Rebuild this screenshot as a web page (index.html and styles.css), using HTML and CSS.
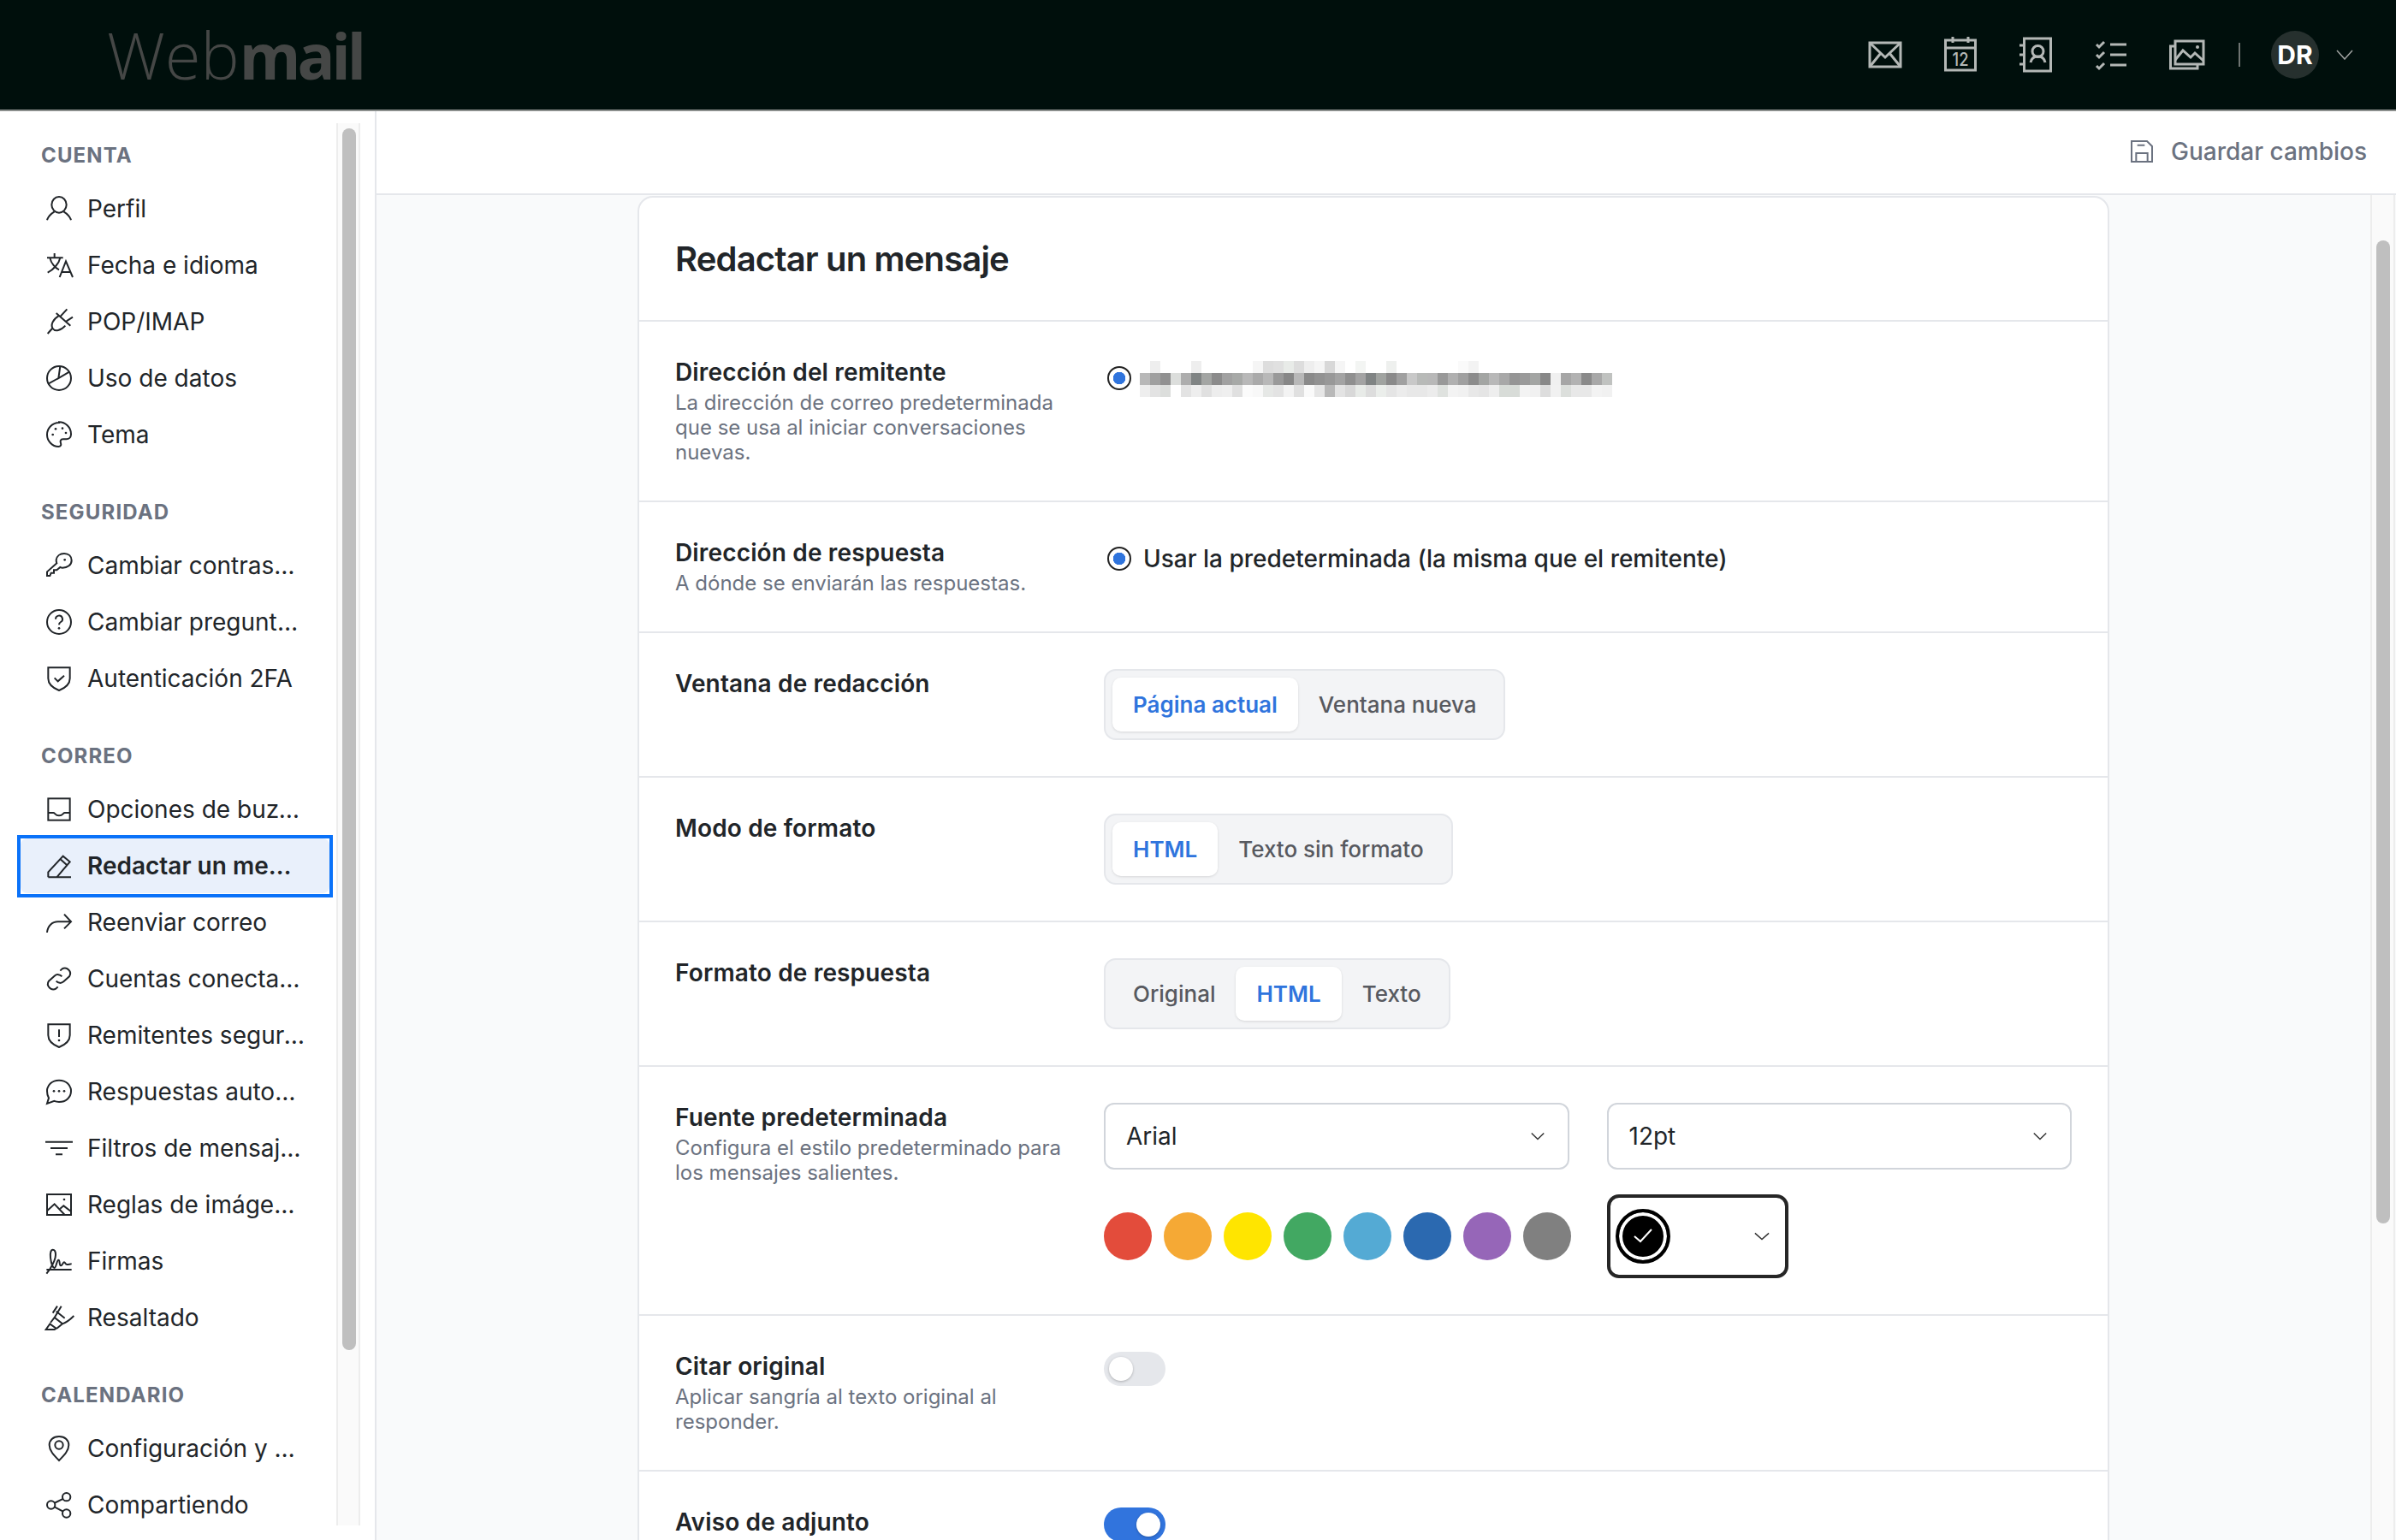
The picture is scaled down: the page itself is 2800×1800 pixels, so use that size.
FILE: index.html
```html
<!DOCTYPE html>
<html lang="es">
<head>
    <meta charset="UTF-8">
    <meta name="viewport" content="width=device-width, initial-scale=1.0">
    <title>Webmail</title>
    <link rel="stylesheet" href="styles.css">
</head>
<body>
    <!-- Barra superior -->
    <header class="topbar">
        <div class="logo">Web<b>mail</b></div>
        <div class="apps">
            <svg class="app-icon" viewBox="0 0 48 48"><rect x="6" y="10" width="36" height="28"/><path d="M6 10l18 17 18-17M6 38l13-16M42 38L29 22"/></svg>
            <svg class="app-icon" viewBox="0 0 48 48"><rect x="6.5" y="7" width="35" height="35"/><path d="M6.5 16h35M15 3v7M33 3v7"/><text class="cal-day" x="24" y="37" textLength="19" lengthAdjust="spacingAndGlyphs">12</text></svg>
            <svg class="app-icon" viewBox="0 0 48 48"><rect x="10.500" y="5" width="31" height="38"/><path d="M5 13h5M5 24h5M5 35h5M18 33c1-5 4.500-7 8.500-7s7.500 2 8.500 7"/><circle cx="26.500" cy="20" r="6.500"/></svg>
            <svg class="app-icon" viewBox="0 0 48 48"><path d="M7 12l3 3 6-6M7 24l3 3 6-6M7 37l3 3 6-6M23 12h19M23 24h19M23 36h19"/></svg>
            <svg class="app-icon" viewBox="0 0 48 48"><rect x="11" y="8" width="33" height="27"/><path d="M11 14H5.500v26H37v-5M11 30l9-11 9 8 5-5 10 9"/><circle class="dot" cx="37" cy="15" r="2"/></svg>
            <span class="apps-sep"></span>
            <span class="avatar">DR</span>
            <svg class="top-chevron" viewBox="0 0 20 12"><path d="M1 1l9 10 9-10"/></svg>
        </div>
    </header>

    <div class="layout">
        <!-- Menu lateral -->
        <aside class="sidebar">
            <nav class="nav">
                <div class="nav-title">CUENTA</div>
                <a class="nav-item"><svg class="nav-icon" viewBox="0 0 24 24"><ellipse cx="12" cy="8.500" rx="6.500" ry="7"/><path d="M1.500 22c1-3.500 4-6 6.500-7.500M22.500 22c-1-3.500-4-6-6.500-7.500"/></svg><span>Perfil</span></a>
                <a class="nav-item"><svg class="nav-icon" viewBox="0 0 24 24"><path d="M1.500 5.500h14M8 1.500v4M4 5.500c1 5 5 9 8 10.500M13 5.500C12 10.500 7 16 2 18.500M12.500 22.500l5.500-14 6 14M14.500 18h7"/></svg><span>Fecha e idioma</span></a>
                <a class="nav-item"><svg class="nav-icon" viewBox="0 0 24 24"><path d="M2 22.500l4-4.500M9.500 4.500L22 15.500M11.500 7c-5 3-7 8-5 11s7 2 11-2.500M13.500 7L19 1M18.500 11.500L24 8"/></svg><span>POP/IMAP</span></a>
                <a class="nav-item"><svg class="nav-icon" viewBox="0 0 24 24"><circle cx="12" cy="12" r="10.500"/><path d="M13 1.500L11.500 12l9.500-5.500M11.500 12L2.500 17"/></svg><span>Uso de datos</span></a>
                <a class="nav-item"><svg class="nav-icon" viewBox="0 0 24 24"><path d="M12 1.500C6 1.500 1.500 6.500 1.500 12s4.500 10.500 10 10.500c2 0 2.500-1.500 2-3s-.5-3.500 2-3.500h3c2 0 4-1.500 4-4.500 0-6-5-10.500-10.500-10.500z"/><circle class="dot" cx="6.500" cy="12" r="1"/><circle class="dot" cx="9" cy="7" r="1"/><circle class="dot" cx="15" cy="6.500" r="1"/><circle class="dot" cx="18" cy="10.500" r="1"/></svg><span>Tema</span></a>

                <div class="nav-title">SEGURIDAD</div>
                <a class="nav-item"><svg class="nav-icon" viewBox="0 0 24 24"><path d="M23 7.500c0 4-3.500 6.500-8 6.500-1 0-1.500-.3-2-.5L10 16H7.500v2.500H5l-1 2.500H1.500v-3.500L10 10c-.5-1-.5-2-.5-3 .5-3 3-5.500 7-5.500s6.500 2.500 6.500 6z"/><circle class="dot" cx="17" cy="7" r="1"/></svg><span>Cambiar contraseña</span></a>
                <a class="nav-item"><svg class="nav-icon" viewBox="0 0 24 24"><circle cx="12" cy="12" r="10.500"/><path d="M9 9.500a3 3 0 1 1 4.500 2.500c-1 .6-1.500 1.200-1.500 2.500"/><circle class="dot" cx="12" cy="17.500" r="1"/></svg><span>Cambiar pregunta de seguridad</span></a>
                <a class="nav-item"><svg class="nav-icon" viewBox="0 0 24 24"><path d="M2.500 2.500h19V12c0 5-4.500 8.500-9.500 10.500C7 20.500 2.500 17 2.500 12z"/><path d="M8 11.500l3 3 5.500-5"/></svg><span>Autenticación 2FA</span></a>

                <div class="nav-title">CORREO</div>
                <a class="nav-item"><svg class="nav-icon" viewBox="0 0 24 24"><rect x="2.500" y="2.500" width="19" height="19"/><path d="M2.500 15h4.500c1.500 0 1.500 2.500 5 2.500s3.500-2.500 5-2.500h4.500"/></svg><span>Opciones de buzón</span></a>
                <a class="nav-item is-active"><svg class="nav-icon" viewBox="0 0 24 24"><path d="M2.500 22h20M2.500 22v-4.500L15.500 3.500l6 5-11.500 13.500M13 6l6 5.500"/></svg><span>Redactar un mensaje</span></a>
                <a class="nav-item"><svg class="nav-icon" viewBox="0 0 24 24"><path d="M1.500 21c.5-6 4.500-9.500 9.500-9.500h11.500M16.500 5l6 6.500-6 6"/></svg><span>Reenviar correo</span></a>
                <a class="nav-item"><svg class="nav-icon" viewBox="0 0 24 24"><path d="M9.500 14a4.500 4.500 0 0 0 6.500.5l5-4.500a4.700 4.700 0 0 0-6.500-6.500l-1.500 1.500M14.500 10a4.500 4.500 0 0 0-6.500-.5l-5 4.500a4.700 4.700 0 0 0 6.500 6.500l1.500-1.500"/></svg><span>Cuentas conectadas</span></a>
                <a class="nav-item"><svg class="nav-icon" viewBox="0 0 24 24"><path d="M2.500 2.500h19V12c0 5-4.500 8.500-9.500 10.500C7 20.500 2.500 17 2.500 12z"/><path d="M12 7v6.500"/><circle class="dot" cx="12" cy="16.500" r="1"/></svg><span>Remitentes seguros</span></a>
                <a class="nav-item"><svg class="nav-icon" viewBox="0 0 24 24"><path d="M12 2c6 0 10.500 4 10.500 9.500S18 21 12 21c-1.500 0-3-.3-4.200-.8L1.500 22.500l1.500-5C2 16 1.500 13.500 1.500 11.500 1.500 6 6 2 12 2z"/><circle class="dot" cx="7.500" cy="11.500" r="1"/><circle class="dot" cx="12" cy="11.500" r="1"/><circle class="dot" cx="16.500" cy="11.500" r="1"/></svg><span>Respuestas automáticas</span></a>
                <a class="nav-item"><svg class="nav-icon" viewBox="0 0 24 24"><path d="M0 6.500h24M4.500 12h15M9 17.500h6"/></svg><span>Filtros de mensajes</span></a>
                <a class="nav-item"><svg class="nav-icon" viewBox="0 0 24 24"><rect x="1.500" y="3" width="21" height="18"/><path d="M1.500 17.500l6.500-6 9 9.500M13 15.500l3-2.500 6.500 5"/><circle class="dot" cx="16.500" cy="7.500" r="1"/></svg><span>Reglas de imágenes</span></a>
                <a class="nav-item"><svg class="nav-icon" viewBox="0 0 24 24"><path d="M1 19.500h22M1 23l3-4c2.500-4 5-8 5-12.500C9 4 8 2 6.500 2S4 4.500 4.500 9s2 9 3.500 9 2-7 3.500-7 .5 5 2 5 2-3 3-3 1 2 2.500 2 2.500-.5 4-.5"/></svg><span>Firmas</span></a>
                <a class="nav-item"><svg class="nav-icon" viewBox="0 0 24 24"><path d="M.5 22.500l3.500-5 5.500 4-1.500 1zM4.500 16.500L8 12l7 5.500-5 4M8 12l6-10M6.500 8l4-6M9.500 6.500l7.500 6M15 17.500c3-1 6-3 10-7"/></svg><span>Resaltado</span></a>

                <div class="nav-title">CALENDARIO</div>
                <a class="nav-item"><svg class="nav-icon" viewBox="0 0 24 24"><path d="M12 1.500c5.500 0 8.500 3.500 8.500 7.500 0 5-4 9-8.500 13.500C7.500 18 3.500 14 3.500 9c0-4 3-7.500 8.500-7.500z"/><circle cx="12" cy="9" r="3.500"/></svg><span>Configuración y ubicación</span></a>
                <a class="nav-item"><svg class="nav-icon" viewBox="0 0 24 24"><circle cx="18.500" cy="5" r="3.500"/><circle cx="5" cy="12" r="3.500"/><circle cx="18.500" cy="19.500" r="3.500"/><path d="M8 10.300l7.500-3.600M8 13.800l7.500 3.900"/></svg><span>Compartiendo</span></a>
            </nav>
            <div class="scrollbar scrollbar-side"><div class="thumb thumb-side"></div></div>
        </aside>

        <main class="main">
            <div class="toolbar">
                <button class="save">
                    <svg class="nav-icon" viewBox="0 0 24 24"><path d="M3 3h13.500L21 7.500V21H3zM8 6.500h6.500M7 21v-7.500h10V21"/></svg>
                    Guardar cambios
                </button>
            </div>

            <div class="content">
                <div class="scroll-area">
                    <section class="card">
                        <h1 class="card-title">Redactar un mensaje</h1>

                        <div class="row">
                            <div class="row-label">
                                <h3>Dirección del remitente</h3>
                                <p>La dirección de correo predeterminada que se usa al iniciar conversaciones nuevas.</p>
                            </div>
                            <div class="radio-line radio-line-blur">
                                <span class="radio"></span>
                                <!-- direccion tapada con pixeles, igual que en la captura -->
                                <svg class="blurred" viewBox="0 0 552 42" shape-rendering="crispEdges">
                                    <rect x="12" y="0" width="12" height="14" fill="#eee"/><rect x="60" y="0" width="12" height="14" fill="#eee"/><rect x="132" y="0" width="12" height="14" fill="#f5f5f5"/><rect x="144" y="0" width="12" height="14" fill="#ddd"/><rect x="156" y="0" width="12" height="14" fill="#e0e0e0"/><rect x="168" y="0" width="12" height="14" fill="#e8ebe8"/><rect x="180" y="0" width="12" height="14" fill="#ddd"/><rect x="192" y="0" width="12" height="14" fill="#eee"/><rect x="204" y="0" width="12" height="14" fill="#f5f5f5"/><rect x="216" y="0" width="12" height="14" fill="#d8d8d8"/><rect x="228" y="0" width="12" height="14" fill="#f5f5f5"/><rect x="252" y="0" width="12" height="14" fill="#f3f5f3"/><rect x="288" y="0" width="12" height="14" fill="#eef0ee"/><rect x="372" y="0" width="12" height="14" fill="#fafafa"/><rect x="384" y="0" width="12" height="14" fill="#f3f3f3"/>
                                    <rect x="0" y="14" width="12" height="14" fill="#b8b8b8"/><rect x="12" y="14" width="12" height="14" fill="#a0a0a0"/><rect x="24" y="14" width="12" height="14" fill="#919191"/><rect x="36" y="14" width="12" height="14" fill="#dcdedc"/><rect x="48" y="14" width="12" height="14" fill="#adadad"/><rect x="60" y="14" width="12" height="14" fill="#808484"/><rect x="72" y="14" width="12" height="14" fill="#a3a5a3"/><rect x="84" y="14" width="12" height="14" fill="#8b8b8b"/><rect x="96" y="14" width="12" height="14" fill="#a1a1a1"/><rect x="108" y="14" width="12" height="14" fill="#a7a9a7"/><rect x="120" y="14" width="12" height="14" fill="#b8b8b8"/><rect x="132" y="14" width="12" height="14" fill="#aaa"/><rect x="144" y="14" width="12" height="14" fill="#b8b8b8"/><rect x="156" y="14" width="12" height="14" fill="#999"/><rect x="168" y="14" width="12" height="14" fill="#878787"/><rect x="180" y="14" width="12" height="14" fill="#b8b8b8"/><rect x="192" y="14" width="12" height="14" fill="#8a8a8a"/><rect x="204" y="14" width="12" height="14" fill="#929292"/><rect x="216" y="14" width="12" height="14" fill="#989898"/><rect x="228" y="14" width="12" height="14" fill="#a3a3a3"/><rect x="240" y="14" width="12" height="14" fill="#8f8f8f"/><rect x="252" y="14" width="12" height="14" fill="#a3a3a3"/><rect x="264" y="14" width="12" height="14" fill="#808484"/><rect x="276" y="14" width="12" height="14" fill="#a0a3a0"/><rect x="288" y="14" width="12" height="14" fill="#8a8a8a"/><rect x="300" y="14" width="12" height="14" fill="#a0a0a0"/><rect x="312" y="14" width="12" height="14" fill="#c8c8c8"/><rect x="324" y="14" width="12" height="14" fill="#b8bab8"/><rect x="336" y="14" width="12" height="14" fill="#b8b8b8"/><rect x="348" y="14" width="12" height="14" fill="#999"/><rect x="360" y="14" width="12" height="14" fill="#b0b0b0"/><rect x="372" y="14" width="12" height="14" fill="#a0a0a0"/><rect x="384" y="14" width="12" height="14" fill="#8c8c8c"/><rect x="396" y="14" width="12" height="14" fill="#a3a5a3"/><rect x="408" y="14" width="12" height="14" fill="#b8b8b8"/><rect x="420" y="14" width="12" height="14" fill="#a8a8a8"/><rect x="432" y="14" width="12" height="14" fill="#959595"/><rect x="444" y="14" width="12" height="14" fill="#9a9a9a"/><rect x="456" y="14" width="12" height="14" fill="#a3a5a3"/><rect x="468" y="14" width="12" height="14" fill="#888"/><rect x="480" y="14" width="12" height="14" fill="#f0f0f0"/><rect x="492" y="14" width="12" height="14" fill="#a6a6a6"/><rect x="504" y="14" width="12" height="14" fill="#b2b2b2"/><rect x="516" y="14" width="12" height="14" fill="#8a8a8a"/><rect x="528" y="14" width="12" height="14" fill="#a8a8a8"/><rect x="540" y="14" width="12" height="14" fill="#c0c2c0"/>
                                    <rect x="0" y="28" width="12" height="14" fill="#eee"/><rect x="12" y="28" width="12" height="14" fill="#e3e3e3"/><rect x="24" y="28" width="12" height="14" fill="#dcdedc"/><rect x="48" y="28" width="12" height="14" fill="#e3e3e3"/><rect x="60" y="28" width="12" height="14" fill="#eee"/><rect x="72" y="28" width="12" height="14" fill="#e0e0e0"/><rect x="84" y="28" width="12" height="14" fill="#ededed"/><rect x="96" y="28" width="12" height="14" fill="#efefef"/><rect x="108" y="28" width="12" height="14" fill="#e0e0e0"/><rect x="120" y="28" width="12" height="14" fill="#fbfbfb"/><rect x="132" y="28" width="12" height="14" fill="#f8f8f8"/><rect x="144" y="28" width="12" height="14" fill="#e6e8e6"/><rect x="156" y="28" width="12" height="14" fill="#e3e3e3"/><rect x="168" y="28" width="12" height="14" fill="#f3f3f3"/><rect x="180" y="28" width="12" height="14" fill="#e0e0e0"/><rect x="192" y="28" width="12" height="14" fill="#fafafa"/><rect x="204" y="28" width="12" height="14" fill="#e6e6e6"/><rect x="216" y="28" width="12" height="14" fill="#b8b8b8"/><rect x="228" y="28" width="12" height="14" fill="#e3e3e3"/><rect x="240" y="28" width="12" height="14" fill="#d8d8d8"/><rect x="252" y="28" width="12" height="14" fill="#e8ebe8"/><rect x="264" y="28" width="12" height="14" fill="#ddd"/><rect x="276" y="28" width="12" height="14" fill="#ebeeeb"/><rect x="288" y="28" width="12" height="14" fill="#e5e5e5"/><rect x="300" y="28" width="12" height="14" fill="#ececec"/><rect x="312" y="28" width="12" height="14" fill="#e8e8e8"/><rect x="324" y="28" width="12" height="14" fill="#e8e8e8"/><rect x="336" y="28" width="12" height="14" fill="#ececec"/><rect x="348" y="28" width="12" height="14" fill="#dfe2df"/><rect x="360" y="28" width="12" height="14" fill="#f3f3f3"/><rect x="372" y="28" width="12" height="14" fill="#f1f1f1"/><rect x="384" y="28" width="12" height="14" fill="#e8e8e8"/><rect x="396" y="28" width="12" height="14" fill="#e5e5e5"/><rect x="408" y="28" width="12" height="14" fill="#eee"/><rect x="420" y="28" width="12" height="14" fill="#d8dcd8"/><rect x="432" y="28" width="12" height="14" fill="#d8dcd8"/><rect x="444" y="28" width="12" height="14" fill="#f3f3f3"/><rect x="456" y="28" width="12" height="14" fill="#f1f1f1"/><rect x="468" y="28" width="12" height="14" fill="#ddd"/><rect x="480" y="28" width="12" height="14" fill="#f1f1f1"/><rect x="492" y="28" width="12" height="14" fill="#dcdfdc"/><rect x="504" y="28" width="12" height="14" fill="#e8e8e8"/><rect x="516" y="28" width="12" height="14" fill="#e8e8e8"/><rect x="528" y="28" width="12" height="14" fill="#f3f3f3"/><rect x="540" y="28" width="12" height="14" fill="#f1f1f1"/>
                                </svg>
                            </div>
                        </div>

                        <div class="row">
                            <div class="row-label">
                                <h3>Dirección de respuesta</h3>
                                <p>A dónde se enviarán las respuestas.</p>
                            </div>
                            <div class="radio-line">
                                <span class="radio"></span>
                                <span>Usar la predeterminada (la misma que el remitente)</span>
                            </div>
                        </div>

                        <div class="row">
                            <div class="row-label"><h3>Ventana de redacción</h3></div>
                            <div class="segment">
                                <span class="seg-btn active">Página actual</span>
                                <span class="seg-btn">Ventana nueva</span>
                            </div>
                        </div>

                        <div class="row">
                            <div class="row-label"><h3>Modo de formato</h3></div>
                            <div class="segment">
                                <span class="seg-btn active">HTML</span>
                                <span class="seg-btn">Texto sin formato</span>
                            </div>
                        </div>

                        <div class="row">
                            <div class="row-label"><h3>Formato de respuesta</h3></div>
                            <div class="segment">
                                <span class="seg-btn">Original</span>
                                <span class="seg-btn active">HTML</span>
                                <span class="seg-btn">Texto</span>
                            </div>
                        </div>

                        <div class="row">
                            <div class="row-label">
                                <h3>Fuente predeterminada</h3>
                                <p>Configura el estilo predeterminado para los mensajes salientes.</p>
                            </div>
                            <div class="font-grid">
                                <div class="select">Arial <svg class="chevron" viewBox="0 0 20 11"><path d="M2 1.500l8 8 8-8"/></svg></div>
                                <div class="select">12pt <svg class="chevron" viewBox="0 0 20 11"><path d="M2 1.500l8 8 8-8"/></svg></div>
                                <div class="swatches">
                                    <span class="swatch c-red"></span>
                                    <span class="swatch c-orange"></span>
                                    <span class="swatch c-yellow"></span>
                                    <span class="swatch c-green"></span>
                                    <span class="swatch c-sky"></span>
                                    <span class="swatch c-blue"></span>
                                    <span class="swatch c-purple"></span>
                                    <span class="swatch c-gray"></span>
                                </div>
                                <div class="picker">
                                    <span class="picker-color">
                                        <svg class="picker-check" viewBox="0 0 24 20"><path d="M2 10l7 6L22 2"/></svg>
                                    </span>
                                    <svg class="chevron" viewBox="0 0 20 11"><path d="M1 1.500l9 8 9-8"/></svg>
                                </div>
                            </div>
                        </div>

                        <div class="row">
                            <div class="row-label">
                                <h3>Citar original</h3>
                                <p>Aplicar sangría al texto original al responder.</p>
                            </div>
                            <div><span class="toggle"><span class="knob"></span></span></div>
                        </div>

                        <div class="row">
                            <div class="row-label"><h3>Aviso de adjunto</h3></div>
                            <div><span class="toggle on"><span class="knob"></span></span></div>
                        </div>
                    </section>
                </div>
                <div class="scrollbar scrollbar-main"><div class="thumb thumb-main"></div></div>
            </div>
        </main>
    </div>
</body>
</html>
```

FILE: styles.css
```css
* {
    box-sizing: border-box;
}

html, body {
    height: 100%;
}

body {
    margin: 0;
    height: 100vh;
    overflow: hidden;
    display: flex;
    flex-direction: column;
    font-family: Inter, "Liberation Sans", sans-serif;
    font-size: 28px;
    color: #212529;
    background: #fff;
}

/* Barra superior */
.topbar {
    flex: none;
    height: 130px;
    display: flex;
    align-items: center;
    justify-content: space-between;
    padding: 0 50px 0 125px;
    background: #000f0c;
    border-bottom: 2px solid #8b8f8d;
}
.logo {
    font-family: "Open Sans", sans-serif;
    font-size: 76px;
    font-weight: 300;
    line-height: 128px;
    color: #454746;
}
.logo b {
    font-size: 73px;
    font-weight: 700;
    letter-spacing: -4px;
}
.apps {
    display: flex;
    align-items: center;
    gap: 40px;
}
.app-icon {
    width: 48px;
    height: 48px;
    fill: none;
    stroke: #b4b8b6;
    stroke-width: 3;
}
.app-icon .dot {
    fill: #b4b8b6;
    stroke: none;
}
.cal-day {
    font-family: Inter, sans-serif;
    font-size: 21px;
    font-weight: 500;
    text-anchor: middle;
    fill: #b4b8b6;
    stroke: none;
}
.apps-sep {
    width: 2px;
    height: 28px;
    background: #6f7472;
    margin-left: -3px;
}
.avatar {
    width: 56px;
    height: 56px;
    margin-left: -4px;
    border-radius: 50%;
    background: #26302e;
    color: #fff;
    font-size: 30px;
    font-weight: 700;
    display: flex;
    align-items: center;
    justify-content: center;
}
.top-chevron {
    width: 20px;
    height: 12px;
    margin-left: -20px;
    fill: none;
    stroke: #a0a4a2;
    stroke-width: 1.5;
}

.layout {
    flex: 1;
    min-height: 0;
    display: flex;
}

/* Menu lateral */
.sidebar {
    flex: none;
    width: 440px;
    display: flex;
    align-items: flex-start;
    border-right: 2px solid #e5e7eb;
    padding-right: 18px;
    overflow: hidden;
}
.nav {
    width: 393px;
    flex: none;
    padding: 33px 8px 0 24px;
}
.nav-title {
    height: 36px;
    line-height: 38px;
    margin: 40px 0 13px 24px;
    font-size: 24px;
    font-weight: 700;
    letter-spacing: 1.15px;
    color: #6b7280;
}
.nav-title:first-child {
    margin-top: 0;
}
.nav-item {
    position: relative;
    height: 64px;
    margin-bottom: 2px;
    display: flex;
    align-items: center;
    gap: 17px;
    padding: 0 29px;
    border-radius: 8px;
}
.nav-item span {
    min-width: 0;
    white-space: nowrap;
    overflow: hidden;
    text-overflow: ellipsis;
}
.nav-item.is-active {
    background: #e9f0fb;
    font-weight: 600;
}
.nav-item.is-active::after {
    content: "";
    position: absolute;
    inset: -4px -4px -5px;
    border: 4px solid #0a72f9;
}
.nav-icon {
    flex: none;
    width: 32px;
    height: 32px;
    fill: none;
    stroke: currentColor;
    stroke-width: 1.5;
    overflow: visible;
}
.nav-icon .dot {
    fill: currentColor;
    stroke: none;
}

/* Barras de scroll */
.scrollbar {
    flex: none;
    width: 28px;
    background: #fafafa;
    border-left: 2px solid #ededed;
    border-right: 2px solid #ededed;
}
.thumb {
    width: 16px;
    margin-left: 5px;
    background: #bfbfbf;
    border-radius: 8px;
}
.scrollbar-side {
    height: 1639px;
    margin-top: 14px;
    padding-top: 6px;
}
.thumb-side {
    height: 1428px;
}
.scrollbar-main {
    width: 29px;
    margin-right: 1px;
    padding-top: 53px;
}
.thumb-main {
    height: 1149px;
}

.main {
    flex: 1;
    min-width: 0;
    display: flex;
    flex-direction: column;
    background: #f9fafb;
}

.toolbar {
    flex: none;
    height: 98px;
    display: flex;
    align-items: center;
    justify-content: flex-end;
    padding: 0 34px 2px 0;
    background: #fff;
    border-bottom: 2px solid #e5e7eb;
}
.save {
    display: flex;
    align-items: center;
    gap: 18px;
    padding: 0;
    border: none;
    background: none;
    font: 500 28px Inter, sans-serif;
    color: #6b7280;
}

.content {
    flex: 1;
    min-height: 0;
    display: flex;
}
.scroll-area {
    flex: 1;
    min-width: 0;
    padding-top: 1px;
    overflow: hidden;
    display: flex;
    justify-content: center;
}

/* Cartao de opcoes */
.card {
    width: 1720px;
    flex: none;
    align-self: flex-start;
    background: #fff;
    border: 2px solid #e5e7eb;
    border-radius: 18px 18px 0 0;
}
.card-title {
    margin: 0;
    padding: 42px;
    font-size: 40px;
    font-weight: 600;
    letter-spacing: -.85px;
    line-height: 59px;
    border-bottom: 2px solid #e5e7eb;
}
.row {
    display: grid;
    grid-template-columns: 460px 1fr;
    column-gap: 41px;
    padding: 42px;
    border-bottom: 2px solid #e5e7eb;
}
.row-label h3 {
    margin: 0 0 3px;
    font-size: 28px;
    font-weight: 600;
    letter-spacing: .15px;
    line-height: 35px;
}
.row-label p {
    margin: 0;
    font-size: 24px;
    line-height: 29px;
    color: #6b7280;
}

.radio-line {
    display: flex;
    align-items: center;
    gap: 14px;
    height: 48px;
    padding-left: 4px;
    font-weight: 500;
}
.radio-line-blur {
    gap: 10px;
}
.radio {
    flex: none;
    width: 28px;
    height: 28px;
    border: 2px solid #222;
    border-radius: 50%;
    background: radial-gradient(circle, #2f74dd 0 7px, #fff 7.5px);
}
.blurred {
    width: 552px;
    height: 42px;
    margin-top: 2px;
}

/* Botoes segmentados */
.segment {
    display: inline-flex;
    justify-self: start;
    padding: 8px;
    background: #f3f4f6;
    border: 2px solid #e5e7eb;
    border-radius: 14px;
}
.seg-btn {
    height: 63px;
    line-height: 63px;
    padding: 0 24px;
    font-size: 26px;
    font-weight: 500;
    color: #57595f;
    border-radius: 10px;
}
.seg-btn.active {
    background: #fff;
    color: #2f74dd;
    font-weight: 600;
    box-shadow: 0 1px 3px rgba(0, 0, 0, .12);
}

/* Fonte e cores */
.font-grid {
    display: grid;
    grid-template-columns: minmax(0, 1fr) minmax(0, 1fr);
    gap: 29px 44px;
    align-items: center;
}
.select {
    height: 78px;
    display: flex;
    align-items: center;
    justify-content: space-between;
    padding: 0 26px 0 24px;
    border: 2px solid #d1d5db;
    border-radius: 12px;
}
.chevron {
    width: 18px;
    height: 10px;
    fill: none;
    stroke: #333;
    stroke-width: 1.6;
}
.swatches {
    display: flex;
    gap: 14px;
}
.swatch {
    flex: none;
    width: 56px;
    height: 56px;
    border-radius: 50%;
}
.c-red { background: #e34c3b; }
.c-orange { background: #f5a935; }
.c-yellow { background: #ffe500; }
.c-green { background: #42a862; }
.c-sky { background: #54aad4; }
.c-blue { background: #2b69b0; }
.c-purple { background: #9666b8; }
.c-gray { background: #808080; }
.picker {
    width: 212px;
    height: 98px;
    display: flex;
    align-items: center;
    justify-content: space-between;
    padding: 0 18px 0 6px;
    border: 4px solid #262626;
    border-radius: 14px;
}
.picker-color {
    width: 64px;
    height: 64px;
    display: flex;
    align-items: center;
    justify-content: center;
    border-radius: 50%;
    background: #000;
    border: 4px solid #000;
    box-shadow: inset 0 0 0 4px #fff;
}
.picker-check {
    width: 24px;
    height: 20px;
    fill: none;
    stroke: #fff;
    stroke-width: 2;
}

/* Interruptores */
.toggle {
    display: flex;
    width: 72px;
    height: 40px;
    padding: 6px;
    background: #e5e7eb;
    border-radius: 20px;
}
.toggle.on {
    justify-content: flex-end;
    background: #3174dd;
}
.knob {
    width: 28px;
    height: 28px;
    border-radius: 50%;
    background: #fff;
    box-shadow: 0 1px 3px rgba(0, 0, 0, .25);
}
```
